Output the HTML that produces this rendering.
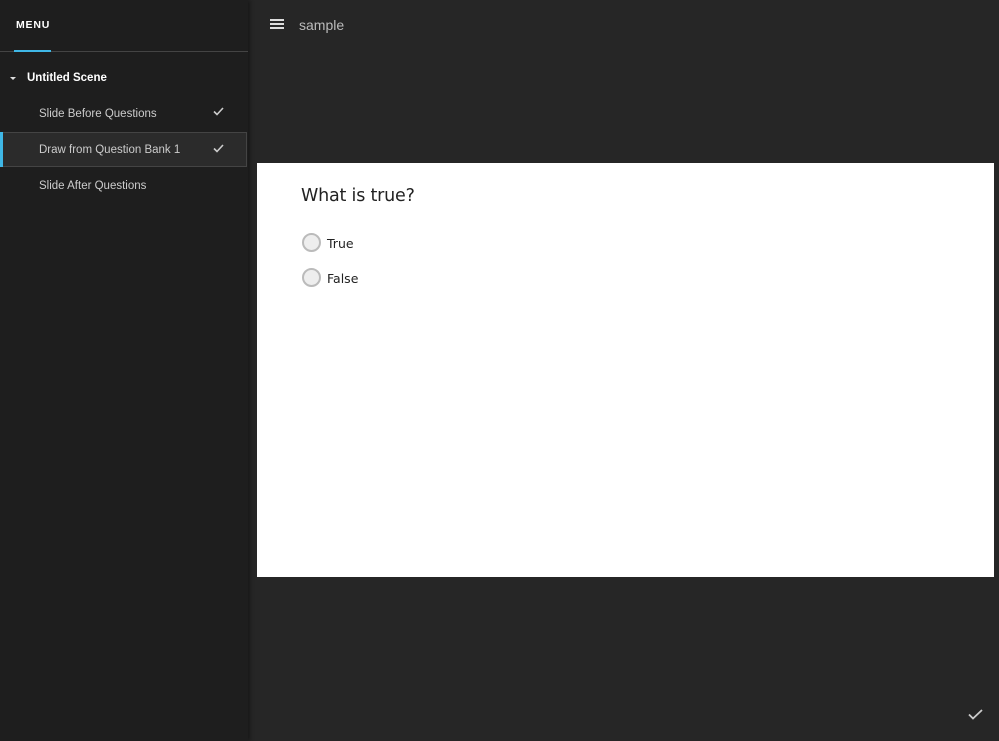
<!DOCTYPE html>
<html><head><style>
*{margin:0;padding:0;box-sizing:border-box}
body{width:999px;height:741px;background:#262626;font-family:"Liberation Sans",sans-serif;position:relative;overflow:hidden}
#side{position:absolute;left:0;top:0;width:248px;height:741px;background:#1e1e1e;box-shadow:2px 0 4px rgba(0,0,0,.4)}
.menu{position:absolute;left:16px;top:19px;color:#fff;font-size:10.5px;font-weight:bold;letter-spacing:.8px}
.ul{position:absolute;left:14px;top:50px;width:37px;height:2px;background:#3fb7e6}
.line{position:absolute;left:0;top:51px;width:248px;height:1px;background:#444}
.scene{position:absolute;left:27px;top:72px;color:#fff;font-size:11.5px;font-weight:bold}
.tri{position:absolute;left:10px;top:77px;border-left:3px solid transparent;border-right:3px solid transparent;border-top:3px solid #ddd}
.item{position:absolute;left:39px;color:#ccc;font-size:11.5px}
.chk{position:absolute;left:213px}
.sel{position:absolute;left:0;top:132px;width:247px;height:35px;background:#2b2b2b;border:1px solid #444}
.bar{position:absolute;left:0;top:132px;width:3px;height:35px;background:#3fb7e6}
.ham{position:absolute;left:270px;width:14px;height:2px;background:#ddd}
.title{position:absolute;left:299px;top:17px;color:#bbb;font-size:14px}
#card{position:absolute;left:257px;top:163px;width:737px;height:414px;background:#fff}
.q{position:absolute;left:44px;top:23px;color:#222;font-family:"DejaVu Sans",sans-serif;font-size:17.5px;letter-spacing:-.2px}
.r{position:absolute;left:45px;width:19px;height:19px;border-radius:50%;border:2px solid #bbb;background:#eee}
.rl{position:absolute;left:70px;font-size:12.5px;color:#222;font-family:"DejaVu Sans",sans-serif}
</style></head><body>
<div id="side">
<div class="menu">MENU</div>
<div class="line"></div><div class="ul"></div>
<div class="tri"></div><div class="scene">Untitled Scene</div>
<div class="item" style="top:108px">Slide Before Questions</div>
<svg class="chk" style="top:107px" width="11" height="9" viewBox="0 0 11 9"><path d="M1 4.5L4 7.5L10 1" stroke="#ccc" stroke-width="1.6" fill="none"/></svg>
<div class="sel"></div><div class="bar"></div>
<div class="item" style="top:144px">Draw from Question Bank 1</div>
<svg class="chk" style="top:144px" width="11" height="9" viewBox="0 0 11 9"><path d="M1 4.5L4 7.5L10 1" stroke="#ccc" stroke-width="1.6" fill="none"/></svg>
<div class="item" style="top:180px">Slide After Questions</div>
</div>
<div class="ham" style="top:19px"></div><div class="ham" style="top:23px"></div><div class="ham" style="top:27px"></div>
<div class="title">sample</div>
<div id="card">
<div class="q">What is true?</div>
<div class="r" style="top:70px"></div><div class="rl" style="top:73px">True</div>
<div class="r" style="top:105px"></div><div class="rl" style="top:108px">False</div>
</div>
<svg style="position:absolute;left:968px;top:709px" width="15" height="11" viewBox="0 0 15 11"><path d="M1 5.5L5 9.5L14 1" stroke="#ccc" stroke-width="1.8" fill="none"/></svg>
</body></html>
